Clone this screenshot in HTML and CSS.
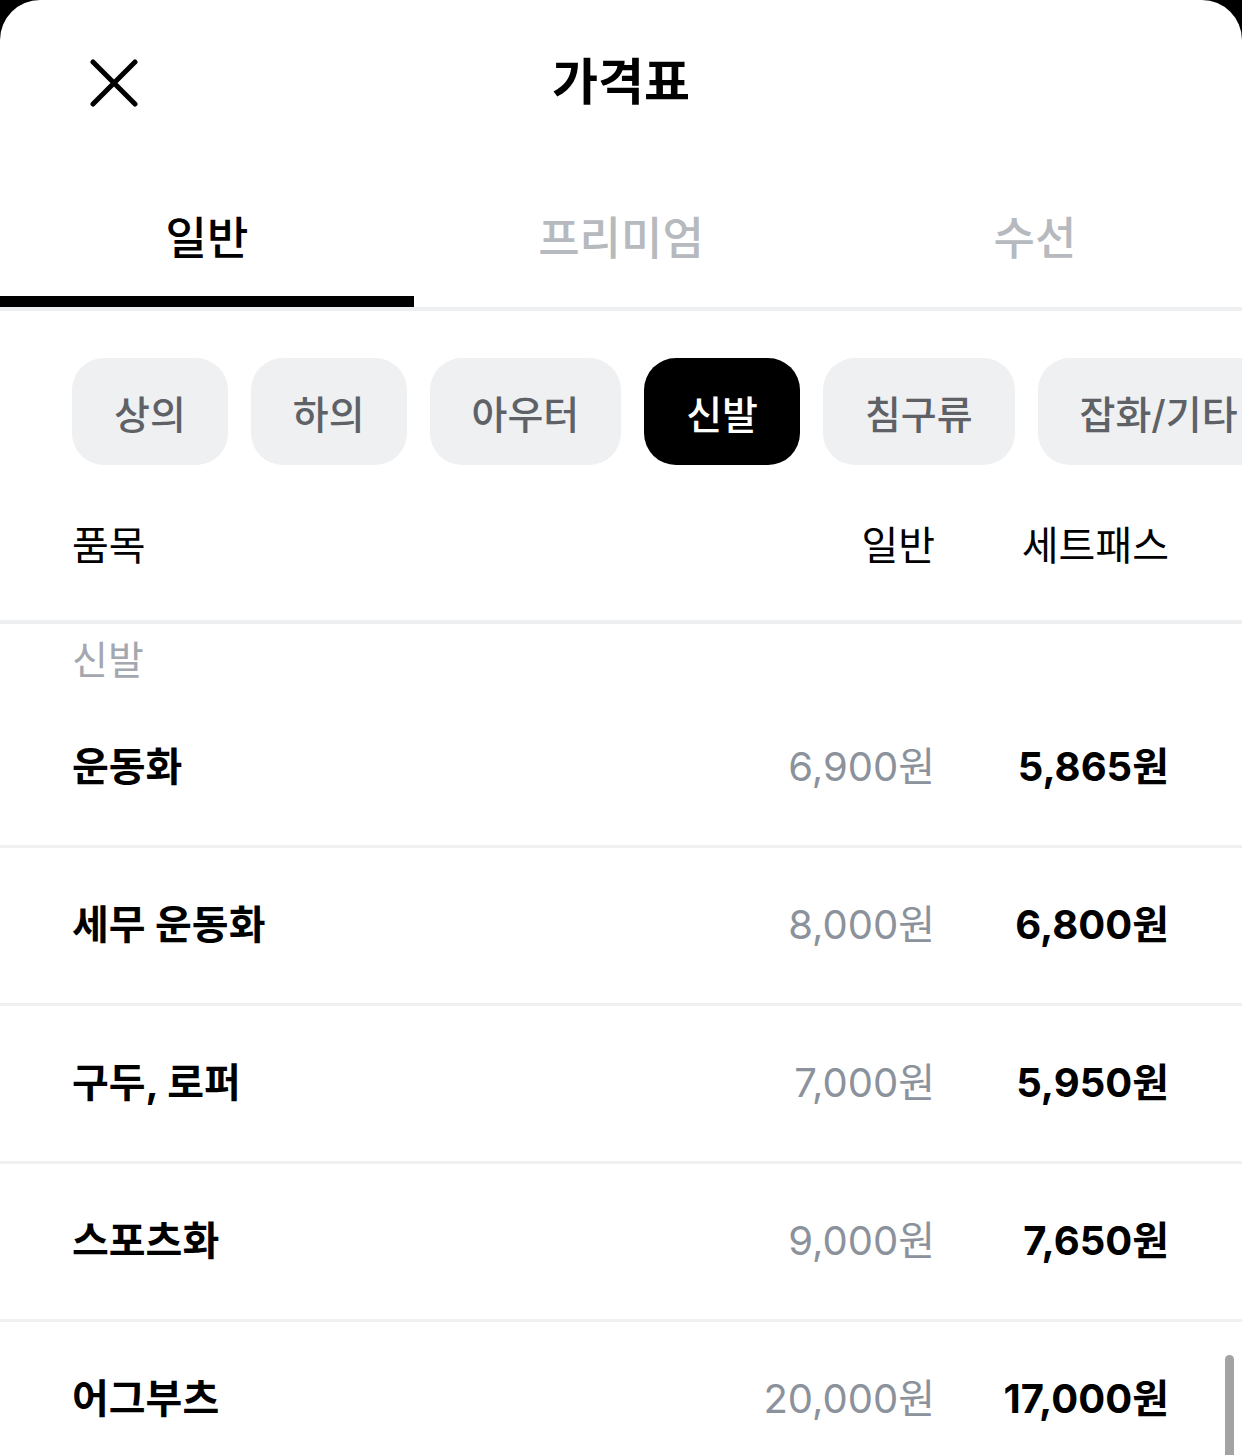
FILE: index.html
```html
<!DOCTYPE html>
<html lang="ko">
  <head>
    <meta charset="utf-8" />
    <meta name="viewport" content="width=device-width" />
    <title>가격표</title>
    <link rel="stylesheet" href="styles.css">
  </head>

  <body>
    <div class="sheet">
      <header class="top">
        <button class="close" aria-label="닫기">
          <svg width="48" height="48" viewBox="0 0 48 48">
            <path d="M3 3 L45 45 M45 3 L3 45" stroke="#000" stroke-width="5" stroke-linecap="round" fill="none" />
          </svg>
        </button>
        <h1>가격표</h1>
      </header>

      <nav class="tabs">
        <a class="tab active">일반</a>
        <a class="tab">프리미엄</a>
        <a class="tab">수선</a>
      </nav>

      <div class="chips">
        <span class="chip">상의</span>
        <span class="chip">하의</span>
        <span class="chip">아우터</span>
        <span class="chip on">신발</span>
        <span class="chip">침구류</span>
        <span class="chip">잡화/기타</span>
      </div>

      <div class="table">
        <div class="head">
          <span>품목</span>
          <span class="num">일반</span>
          <span class="num">세트패스</span>
        </div>

        <div class="group">신발</div>

        <div class="row">
          <span class="name">운동화</span>
          <span class="price">6,900원</span>
          <span class="pass">5,865원</span>
        </div>
        <div class="row">
          <span class="name">세무 운동화</span>
          <span class="price">8,000원</span>
          <span class="pass">6,800원</span>
        </div>
        <div class="row">
          <span class="name">구두, 로퍼</span>
          <span class="price">7,000원</span>
          <span class="pass">5,950원</span>
        </div>
        <div class="row">
          <span class="name">스포츠화</span>
          <span class="price">9,000원</span>
          <span class="pass">7,650원</span>
        </div>
        <div class="row">
          <span class="name">어그부츠</span>
          <span class="price">20,000원</span>
          <span class="pass">17,000원</span>
        </div>
      </div>

      <div class="scrollbar"></div>
    </div>
  </body>
</html>
```

FILE: styles.css
```css
html,
body {
  margin: 0;
  padding: 0;
  background: #000;
}

body {
  font-family: Inter, "Noto Sans CJK KR", sans-serif;
  color: #000;
}

.sheet {
  position: relative;
  background: #fff;
  border-radius: 40px 40px 0 0;
  height: 1455px;
  overflow: hidden;
}

/* title bar */
.top {
  position: relative;
  height: 160px;
  display: flex;
  align-items: center;
  justify-content: center;
}

.top h1 {
  margin: 0 0 4px;
  font-size: 50px;
  font-weight: 700;
}

.close {
  position: absolute;
  left: 90px;
  top: 59px;
  padding: 0;
  border: 0;
  background: none;
  width: 48px;
  height: 48px;
}

.close svg {
  display: block;
}

/* main tabs */
.tabs {
  display: grid;
  grid-template-columns: repeat(3, 1fr);
  border-bottom: 4px solid #eeeff1;
}

.tab {
  height: 122px;
  padding-top: 14px;
  display: flex;
  align-items: center;
  justify-content: center;
  font-size: 45px;
  font-weight: 500;
  color: #b6b9be;
  border-bottom: 11px solid transparent;
}

.tab.active {
  color: #000;
  border-bottom-color: #000;
}

/* category chips */
.chips {
  display: flex;
  gap: 23px;
  padding: 0 0 0 72px;
  margin-top: 47px;
  white-space: nowrap;
}

.chip {
  flex: none;
  height: 107px;
  padding: 0 42px;
  border-radius: 32px;
  background: #eff0f2;
  color: #5e6267;
  font-size: 39px;
  font-weight: 500;
  display: flex;
  align-items: center;
  box-sizing: border-box;
}

.chip.on {
  background: #000;
  color: #fff;
}

/* price table */
.head,
.row {
  display: grid;
  grid-template-columns: 1fr 220px 234px;
  align-items: center;
  padding: 0 73px 0 72px;
}

.head {
  height: 155px;
  border-bottom: 4px solid #eeeff1;
  font-size: 40px;
}

.num,
.price,
.pass {
  text-align: right;
}

.group {
  height: 66px;
  line-height: 72px;
  padding-left: 72px;
  font-size: 39px;
  color: #a3a8b0;
}

.row {
  height: 158px;
  border-bottom: 3px solid #eff0f2;
  font-size: 40px;
  padding-bottom: 8px;
  box-sizing: border-box;
}

.name {
  font-weight: 700;
}

.price {
  color: #8b929b;
}

.pass {
  font-weight: 700;
}

.scrollbar {
  position: absolute;
  right: 8px;
  top: 1355px;
  width: 9px;
  height: 120px;
  border-radius: 5px;
  background: #a3a3a3;
}
```
